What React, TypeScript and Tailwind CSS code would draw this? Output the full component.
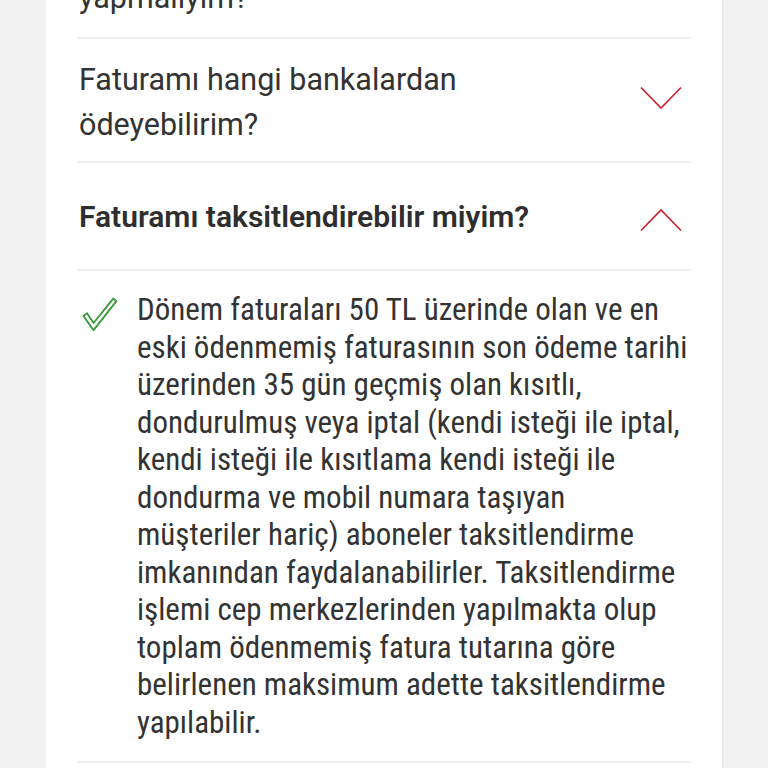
const bodyLines = [
  "Dönem faturaları 50 TL üzerinde olan ve en",
  "eski ödenmemiş faturasının son ödeme tarihi",
  "üzerinden 35 gün geçmiş olan kısıtlı,",
  "dondurulmuş veya iptal (kendi isteği ile iptal,",
  "kendi isteği ile kısıtlama kendi isteği ile",
  "dondurma ve mobil numara taşıyan",
  "müşteriler hariç) aboneler taksitlendirme",
  "imkanından faydalanabilirler. Taksitlendirme",
  "işlemi cep merkezlerinden yapılmakta olup",
  "toplam ödenmemiş fatura tutarına göre",
  "belirlenen maksimum adette taksitlendirme",
  "yapılabilir.",
];

function Chevron({ up }: { up?: boolean }) {
  return (
    <svg width="44" height="24" viewBox="0 0 44 24" fill="none" className="block">
      <polyline
        points={up ? "2,22.5 22,2 42,22.5" : "2,1.5 22,22 42,1.5"}
        stroke="#cc1f2d"
        strokeWidth="1.6"
        strokeLinejoin="miter"
      />
    </svg>
  );
}

function CheckMark() {
  return (
    <svg width="36" height="36" viewBox="0 0 36 36" fill="none" className="block">
      <path
        d="M1.5 19 L5 16.2 L11.6 26 L31.2 1.6 L34.4 4.2 L11.6 33.2 Z"
        stroke="#3a9c3d"
        strokeWidth="1.9"
        strokeLinejoin="round"
        fill="#ffffff"
      />
    </svg>
  );
}

function Divider() {
  return <div className="h-[2px] bg-[#eeeeee]" />;
}

export default function App() {
  return (
    <div className="h-[768px] overflow-hidden bg-[#f2f2f2] px-[46px] font-['Roboto',sans-serif] text-[#333333]">
      <div className="-mt-[24px] bg-white px-[31px] pr-[32px] shadow-[1px_0_2px_rgba(0,0,0,0.06)]">
        {/* previous question, scrolled mostly out of view */}
        <div className="pb-[17px] pl-[2px] text-[30.5px] leading-[44px]">yapmalıyım?</div>
        <Divider />

        <div className="flex min-h-[106px]">
          <div className="flex-1 self-center pb-[14px] pl-[2px] pt-[18px] text-[30.5px] leading-[45px]">
            Faturamı hangi bankalardan
            <br />
            ödeyebilirim?
          </div>
          <div className="mr-[7px] mt-[47px] self-start">
            <Chevron />
          </div>
        </div>
        <Divider />

        <div className="flex min-h-[106px]">
          <div className="flex-1 self-center pb-[16px] pl-[2px] pt-[18px] text-[30px] font-semibold leading-[44px] text-[#2e2e2e]">
            Faturamı taksitlendirebilir miyim?
          </div>
          <div className="mr-[7px] mt-[45px] self-start">
            <Chevron up />
          </div>
        </div>
        <Divider />

        <div className="flex items-start pb-[20px] pt-[20px]">
          <div className="ml-[5px] mr-[19px] mt-[6px] shrink-0">
            <CheckMark />
          </div>
          <div className="font-stretch-condensed text-[31px] leading-[37.5px]">
            {bodyLines.map((line) => (
              <span key={line} className="block whitespace-nowrap">
                {line}
              </span>
            ))}
          </div>
        </div>
        <Divider />
        <div className="h-[40px]" />
      </div>
    </div>
  );
}
